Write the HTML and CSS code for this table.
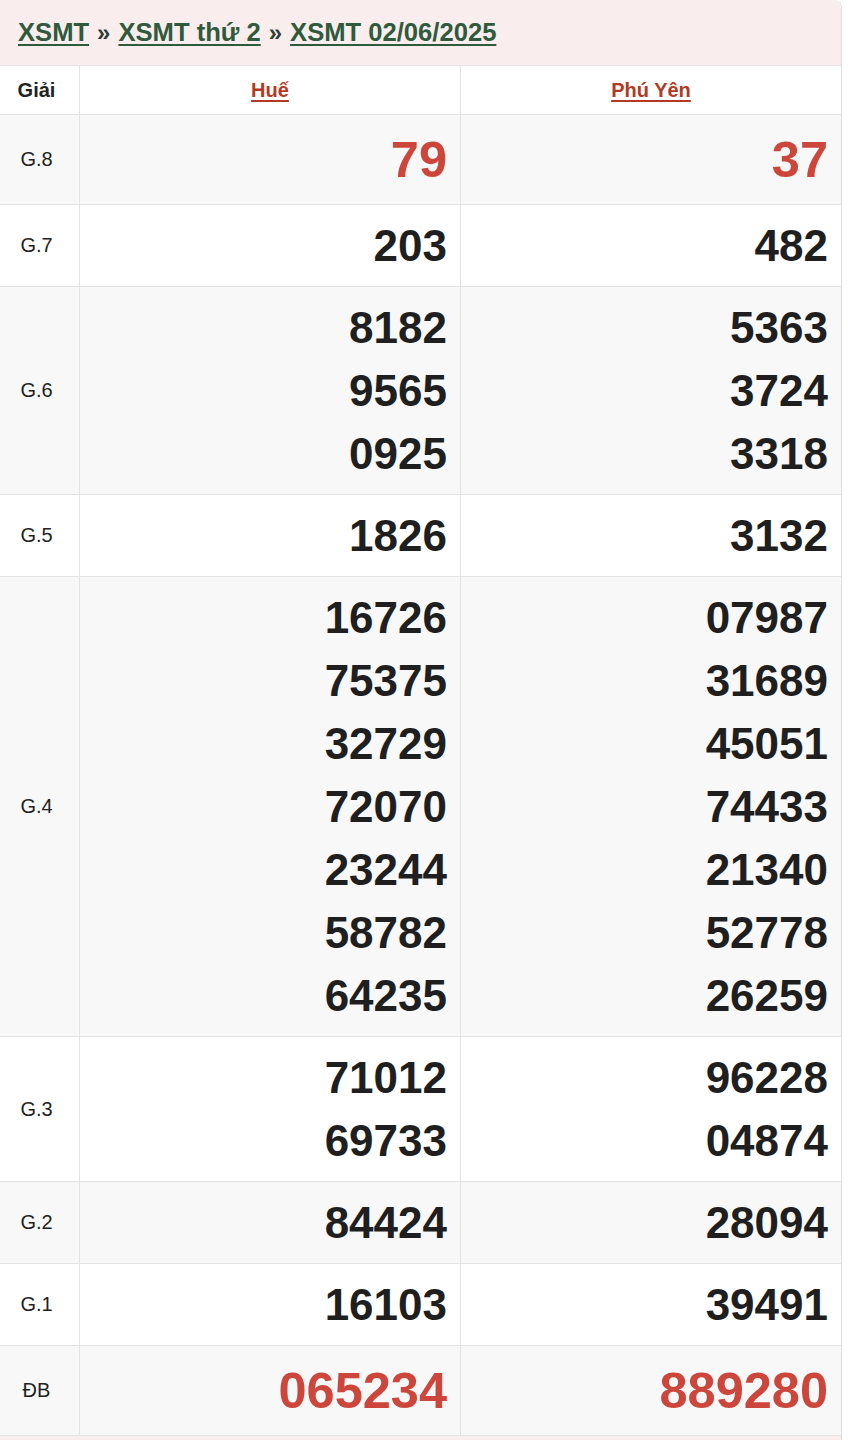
FILE: index.html
```html
<!DOCTYPE html>
<html lang="vi">
<head>
<meta charset="utf-8">
<title>XSMT 02/06/2025</title>
<link rel="stylesheet" href="styles.css">
</head>
<body>
<div class="box">
  <div class="crumb">
    <a href="#">XSMT</a> <span class="sep">»</span> <a href="#">XSMT thứ 2</a> <span class="sep">»</span> <a href="#">XSMT 02/06/2025</a>
  </div>
  <div class="grid">
    <div class="cell head label">Giải</div>
    <div class="cell head"><a href="#">Huế</a></div>
    <div class="cell head"><a href="#">Phú Yên</a></div>

    <div class="cell label alt">G.8</div>
    <div class="cell nums alt big red"><div>79</div></div>
    <div class="cell nums alt big red"><div>37</div></div>

    <div class="cell label">G.7</div>
    <div class="cell nums"><div>203</div></div>
    <div class="cell nums"><div>482</div></div>

    <div class="cell label alt">G.6</div>
    <div class="cell nums alt"><div>8182</div><div>9565</div><div>0925</div></div>
    <div class="cell nums alt"><div>5363</div><div>3724</div><div>3318</div></div>

    <div class="cell label">G.5</div>
    <div class="cell nums"><div>1826</div></div>
    <div class="cell nums"><div>3132</div></div>

    <div class="cell label alt">G.4</div>
    <div class="cell nums alt"><div>16726</div><div>75375</div><div>32729</div><div>72070</div><div>23244</div><div>58782</div><div>64235</div></div>
    <div class="cell nums alt"><div>07987</div><div>31689</div><div>45051</div><div>74433</div><div>21340</div><div>52778</div><div>26259</div></div>

    <div class="cell label">G.3</div>
    <div class="cell nums"><div>71012</div><div>69733</div></div>
    <div class="cell nums"><div>96228</div><div>04874</div></div>

    <div class="cell label alt">G.2</div>
    <div class="cell nums alt"><div>84424</div></div>
    <div class="cell nums alt"><div>28094</div></div>

    <div class="cell label">G.1</div>
    <div class="cell nums"><div>16103</div></div>
    <div class="cell nums"><div>39491</div></div>

    <div class="cell label alt">ĐB</div>
    <div class="cell nums alt big red"><div>065234</div></div>
    <div class="cell nums alt big red"><div>889280</div></div>
  </div>
  <div class="foot"></div>
</div>
</body>
</html>
```
FILE: styles.css
```css
* { box-sizing: border-box; }
html, body { margin: 0; padding: 0; background: #fff; }
body { font-family: "Liberation Sans", Arial, sans-serif; color: #222; }

.box {
  width: 842px;
  border-right: 1px solid #dedede;
  border-top-right-radius: 8px;
  overflow: hidden;
}

.crumb {
  height: 66px;
  background: #f9eded;
  border-bottom: 1px solid #e3e3e3;
  padding: 0 0 0 18px;
  display: flex;
  align-items: center;
  gap: 8px;
  font-size: 25.6px;
  font-weight: bold;
  color: #2f3f36;
  white-space: pre;
}
.crumb a {
  color: #2f5a3c;
  text-decoration: underline;
  text-decoration-thickness: 2px;
  text-underline-offset: 3px;
}
.crumb .sep { font-size: 24px; }

.grid {
  display: grid;
  grid-template-columns: 80px 381px 381px;
  margin-right: -1px;
}
.cell {
  border-right: 1px solid #e3e3e3;
  border-bottom: 1px solid #e3e3e3;
  background: #fff;
}
.cell.alt { background: #f8f8f8; }

.head {
  height: 49px;
  display: flex;
  align-items: center;
  justify-content: center;
  font-size: 20px;
  font-weight: bold;
}
.head a {
  color: #b33a22;
  text-decoration: underline;
  text-decoration-thickness: 2px;
  text-underline-offset: 3px;
}

.label {
  display: flex;
  align-items: center;
  justify-content: center;
  padding-right: 6px;
  font-size: 20px;
  color: #222;
}
.head.label { font-size: 20px; font-weight: bold; }

.nums {
  padding: 9px 13px;
  text-align: right;
  font-size: 44px;
  font-weight: bold;
  line-height: 63px;
  color: #1f1f1f;
}
.nums.big { font-size: 50.5px; line-height: 71px; }
.nums.red { color: #cc463b; }

.foot { height: 10px; background: #f9eded; }
```
